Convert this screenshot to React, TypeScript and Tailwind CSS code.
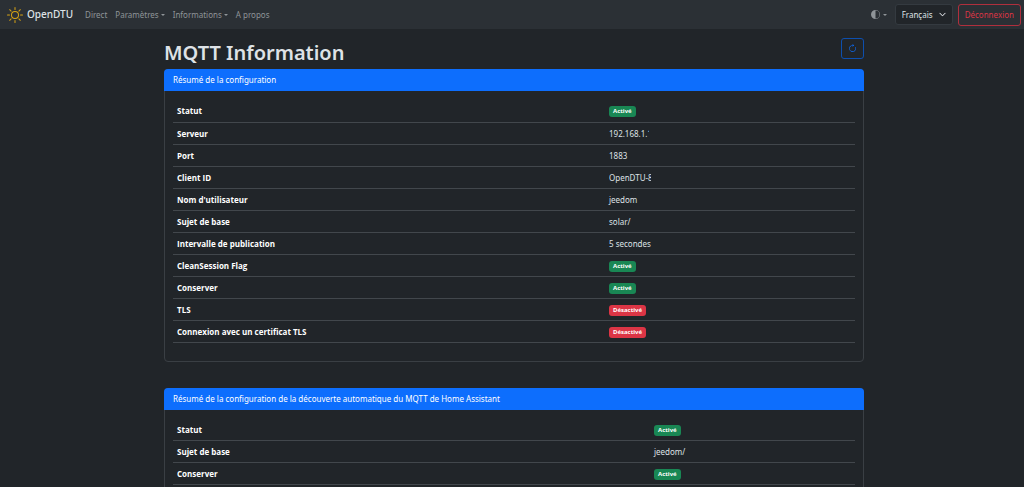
import { type ReactNode } from "react";
import { BsArrowClockwise, BsChevronDown, BsCircleHalf, BsSun } from "react-icons/bs";

interface InfoRow {
  label: string;
  value: ReactNode;
}

function StatusBadge({ enabled }: { enabled: boolean }) {
  return (
    <span
      className={`inline-block rounded-[3px] px-1 font-['Open_Sans',sans-serif] text-[6px] leading-[11px] font-bold text-white align-middle ${
        enabled ? "bg-[#198754]" : "bg-[#dc3545]"
      }`}
    >
      {enabled ? "Activé" : "Désactivé"}
    </span>
  );
}

const MQTT_ROWS: InfoRow[] = [
  { label: "Statut", value: <StatusBadge enabled={true} /> },
  { label: "Serveur", value: <span className="block w-10 overflow-hidden whitespace-nowrap">192.168.1.1</span> },
  { label: "Port", value: "1883" },
  { label: "Client ID", value: <span className="block w-[42px] overflow-hidden whitespace-nowrap">OpenDTU-8</span> },
  { label: "Nom d'utilisateur", value: "jeedom" },
  { label: "Sujet de base", value: "solar/" },
  { label: "Intervalle de publication", value: "5 secondes" },
  { label: "CleanSession Flag", value: <StatusBadge enabled={true} /> },
  { label: "Conserver", value: <StatusBadge enabled={true} /> },
  { label: "TLS", value: <StatusBadge enabled={false} /> },
  { label: "Connexion avec un certificat TLS", value: <StatusBadge enabled={false} /> },
];

const HASS_ROWS: InfoRow[] = [
  { label: "Statut", value: <StatusBadge enabled={true} /> },
  { label: "Sujet de base", value: "jeedom/" },
  { label: "Conserver", value: <StatusBadge enabled={true} /> },
];

function InfoCard({ title, rows, labelWidth }: { title: string; rows: InfoRow[]; labelWidth: string }) {
  return (
    <section className="rounded border border-[#3a3f44]">
      <h2 className="-mx-px -mt-px rounded-t bg-[#0d6efd] px-[9px] text-[8px] leading-[22px] text-white">{title}</h2>
      <div className="px-2 pt-[9px] pb-[18px]">
        <table className="w-full table-fixed border-collapse text-left text-[8px] leading-[13px]">
          <tbody>
            {rows.map((row) => (
              <tr key={row.label} className="h-[22px] border-b border-[#42474c]">
                <th
                  scope="row"
                  className={`px-1 py-0 font-['Open_Sans','Noto_Sans',sans-serif] font-bold text-white ${labelWidth}`}
                >
                  {row.label}
                </th>
                <td className="px-1 py-0 text-[#dee2e6]">{row.value}</td>
              </tr>
            ))}
          </tbody>
        </table>
      </div>
    </section>
  );
}

function Caret() {
  return <span className="inline-block border-x-2 border-t-2 border-x-transparent border-t-current" />;
}

export default function App() {
  return (
    <div className="min-h-screen bg-[#212529] font-['Noto_Sans','Open_Sans',sans-serif] text-[#dee2e6]">
      {/* Navbar */}
      <nav className="flex h-[29px] items-center bg-[#2b3035] pr-[3px] pl-[7px] text-[8px] text-[#8f9498]">
        <a href="#" className="mr-3 flex items-center gap-1 text-[10px] font-medium text-[#dee2e6]">
          <BsSun className="size-4 text-[#d9a514]" />
          OpenDTU
        </a>
        <div className="flex items-center gap-2">
          <a href="#">Direct</a>
          <button type="button" className="flex items-center gap-[2px]">
            Paramètres <Caret />
          </button>
          <button type="button" className="flex items-center gap-[2px]">
            Informations <Caret />
          </button>
          <a href="#">A propos</a>
        </div>
        <div className="ml-auto flex items-center">
          <button type="button" aria-label="Thème" className="mr-2 flex items-center gap-[3px]">
            <BsCircleHalf className="size-[9px]" /> <Caret />
          </button>
          <div className="relative mr-[5px]">
            <select
              aria-label="Langue"
              className="h-[21px] w-[58px] appearance-none rounded-[3px] border border-[#343a40] bg-[#212529] pl-[6px] text-[#dee2e6]"
            >
              <option>Français</option>
            </select>
            <BsChevronDown className="pointer-events-none absolute top-[7px] right-[7px] size-[7px] stroke-1 text-[#dee2e6]" />
          </div>
          <button type="button" className="h-[22px] rounded-[3px] border border-[#b02f3d] px-[6px] text-[#dc3545]">
            Déconnexion
          </button>
        </div>
      </nav>

      <div className="pt-[9px] pl-1">
        <main className="mx-auto max-w-[700px]">
          <div className="mb-[1px] flex h-[30px] items-start justify-between">
            <h1 className="text-[20px] leading-[29px] font-semibold">MQTT Information</h1>
            <button
              type="button"
              aria-label="Rafraîchir"
              className="flex h-[21px] w-[23px] items-center justify-center rounded-[3px] border border-[#0d4fae] text-[#0d6efd]"
            >
              <BsArrowClockwise className="size-[9px]" />
            </button>
          </div>
          <div className="space-y-[26px]">
            <InfoCard title="Résumé de la configuration" rows={MQTT_ROWS} labelWidth="w-[432px]" />
            <InfoCard
              title="Résumé de la configuration de la découverte automatique du MQTT de Home Assistant"
              rows={HASS_ROWS}
              labelWidth="w-[477px]"
            />
          </div>
        </main>
      </div>
    </div>
  );
}
